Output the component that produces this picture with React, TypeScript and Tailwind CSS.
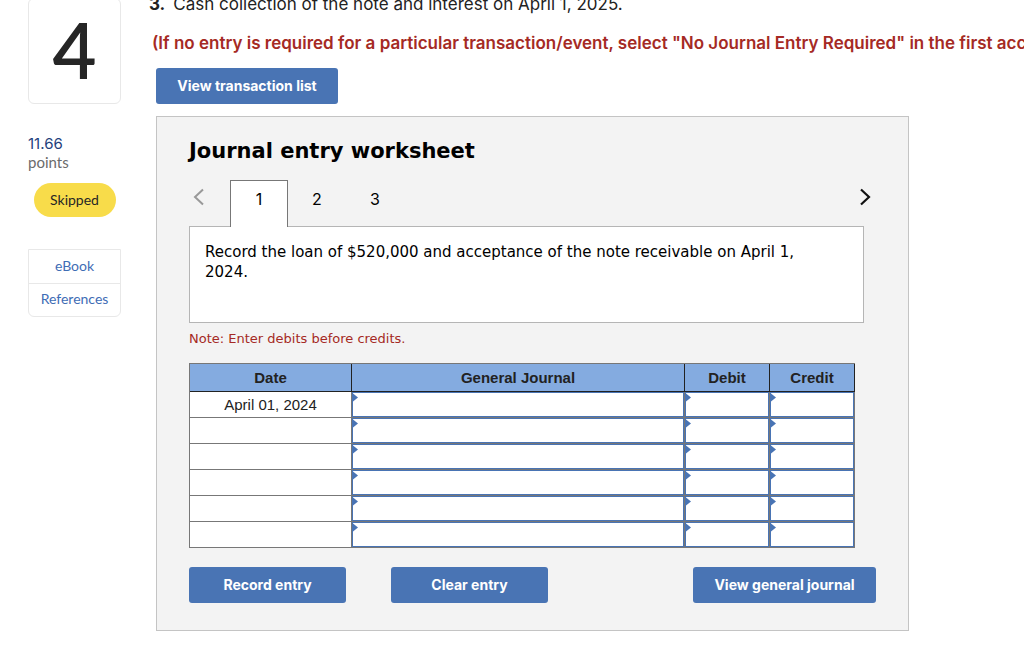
import { useState } from 'react';

const tabs = ['1', '2', '3'];
const dates = ['April 01, 2024', '', '', '', '', ''];
const entryColumns = ['General Journal', 'Debit', 'Credit'];

function BlueButton({ children, className }: { children: string; className: string }) {
  return (
    <button
      type="button"
      className={`h-9 rounded-[3px] bg-[#4974b4] text-white font-['Inter',sans-serif] text-sm font-bold whitespace-nowrap ${className}`}
    >
      {children}
    </button>
  );
}

function Sidebar() {
  return (
    <aside className="w-[93px] shrink-0 font-['Lato',sans-serif]">
      <div className="-mt-0.5 h-[106px] pb-0.5 flex items-center justify-center rounded-md border border-[#e8e8e8] text-[#262626] text-[76px] font-semibold leading-none">
        4
      </div>
      <div className="mt-[30px] font-['Inter',sans-serif] text-[15px] leading-5 text-[#1f3f7c]">11.66</div>
      <div className="text-[15px] leading-4 text-[#6b6b6b]">points</div>
      <div className="mt-[13px] mx-auto w-[82px] h-[34px] flex items-center justify-center rounded-full bg-[#f8dc4a] text-sm text-[#262626]">
        Skipped
      </div>
      <nav className="mt-8 flex flex-col rounded-b-md border border-[#e8e8e8] text-sm text-center text-[#3f6db5]">
        <a href="#ebook" className="h-[34px] leading-8 border-b border-[#e8e8e8]">eBook</a>
        <a href="#references" className="h-8 leading-[30px]">References</a>
      </nav>
    </aside>
  );
}

function JournalTable() {
  return (
    <table className="mt-4 w-[666px] max-w-full table-fixed border-separate border-spacing-0 border-t border-l border-[#777] font-['Liberation_Sans',Arial,sans-serif] text-[15px] text-[#222]">
      <colgroup>
        <col className="w-[162px]" />
        <col />
        <col className="w-[85px]" />
        <col className="w-[85px]" />
      </colgroup>
      <thead>
        <tr className="h-7 bg-[#84abe0]">
          <th className="border-r border-b border-[#222] p-0 font-bold leading-5">Date</th>
          {entryColumns.map((name) => (
            <th key={name} className="border-r border-b border-[#222] p-0 font-bold leading-5">{name}</th>
          ))}
        </tr>
      </thead>
      <tbody>
        {dates.map((date, row) => (
          <tr key={row} className="h-[26px] bg-white">
            <td className="border-r border-b border-[#777] p-0 text-center leading-5">{date}</td>
            {entryColumns.map((name) => (
              <td key={name} className="relative border-r border-b border-[#777] p-0">
                <input
                  type="text"
                  aria-label={`${name}, line ${row + 1}`}
                  className="block w-full h-[25px] border border-[#4974b4] bg-white px-2 outline-none"
                />
                <svg className="absolute left-0 top-px" width="6" height="9" viewBox="0 0 6 9" aria-hidden="true">
                  <path d="M0 0.5H1L6 4.5L1 8.5H0Z" fill="#4974b4" />
                </svg>
              </td>
            ))}
          </tr>
        ))}
      </tbody>
    </table>
  );
}

function Worksheet() {
  const [active, setActive] = useState('1');

  return (
    <section className="mt-3 w-full max-w-[753px] border border-[#c4c4c4] bg-[#f3f3f3] px-8 pt-5 pb-[27px] text-black font-['DejaVu_Sans',Verdana,sans-serif]">
      <h2 className="text-[21px] leading-7 font-bold">Journal entry worksheet</h2>

      <div className="mt-[15px] mr-[5px] flex items-start">
        <button type="button" aria-label="Previous" className="mt-[7px] w-[41px] h-5 pl-1">
          <svg width="12" height="18" viewBox="0 0 12 18" fill="none">
            <path d="M10 1.5L2 9L10 16.5" stroke="#999" strokeWidth="2" />
          </svg>
        </button>
        <div className="flex">
          {tabs.map((tab) => (
            <button
              key={tab}
              type="button"
              onClick={() => setActive(tab)}
              className={`relative z-10 w-[58px] h-[47px] -mb-px pb-2.5 border border-b-0 font-['Inter',sans-serif] text-base ${
                active === tab ? 'bg-white border-[#777]' : 'border-transparent'
              }`}
            >
              {tab}
            </button>
          ))}
        </div>
        <button type="button" aria-label="Next" className="mt-[7px] ml-auto h-5">
          <svg width="12" height="18" viewBox="0 0 12 18" fill="none">
            <path d="M2 1.5L10 9L2 16.5" stroke="#111" strokeWidth="2.2" />
          </svg>
        </button>
      </div>

      <div className="mr-3 min-h-[97px] border border-[#b5b5b5] bg-white pl-[15px] pr-14 pt-[15px] text-[15px] leading-5">
        Record the loan of $520,000 and acceptance of the note receivable on April 1, 2024.
      </div>
      <p className="mt-2 text-[13px] leading-4 text-[#a52a24]">Note: Enter debits before credits.</p>

      <JournalTable />

      <div className="mt-[19px] flex items-center gap-[45px]">
        <BlueButton className="w-[157px]">Record entry</BlueButton>
        <BlueButton className="w-[157px]">Clear entry</BlueButton>
        <BlueButton className="ml-auto w-[183px]">View general journal</BlueButton>
      </div>
    </section>
  );
}

export default function App() {
  return (
    <div className="flex gap-7 overflow-hidden bg-white pl-7 pb-6">
      <Sidebar />
      <main className="flex-1 min-w-0 pl-[7px]">
        <p className="-mt-2 -ml-[7px] leading-6 font-['Inter',sans-serif] text-[17px] text-[#222] whitespace-nowrap">
          <b className="mr-2">3.</b>Cash collection of the note and interest on April 1, 2025.
        </p>
        <p className="mt-[15px] -ml-1 leading-6 font-['Inter',sans-serif] text-[17px] font-semibold text-[#a52a24] whitespace-nowrap">
          (If no entry is required for a particular transaction/event, select "No Journal Entry Required" in the first account field.)
        </p>
        <BlueButton className="mt-[13px] w-[182px]">View transaction list</BlueButton>
        <Worksheet />
      </main>
    </div>
  );
}
